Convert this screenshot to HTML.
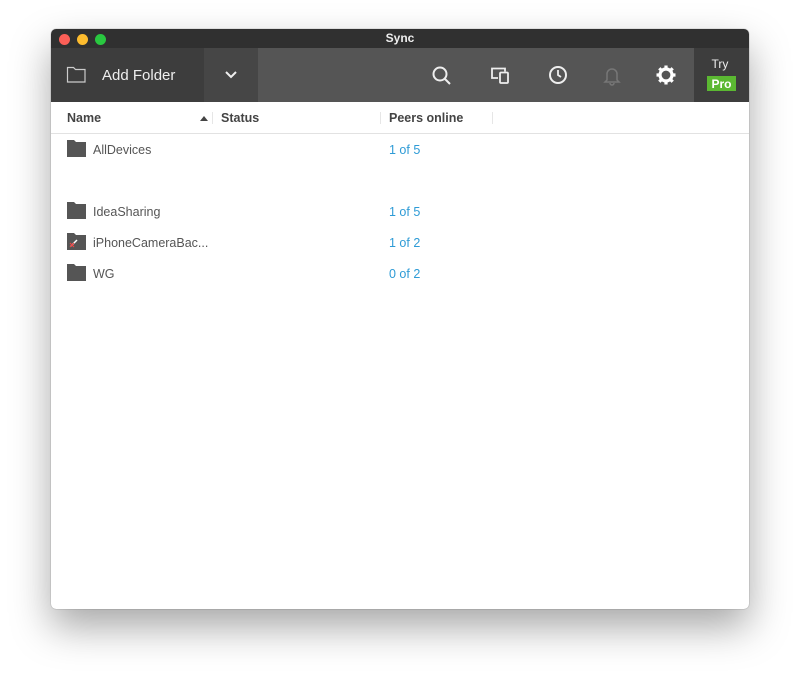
<!DOCTYPE html>
<html><head><style>
body{margin:0;width:800px;height:682px;background:#fff;position:relative;overflow:hidden;font-family:"Liberation Sans",sans-serif}
.win{position:absolute;left:51px;top:29px;width:698px;height:580px;background:#fff;border-radius:5px;overflow:hidden;box-shadow:0 18px 40px rgba(0,0,0,.35),0 0 1px rgba(0,0,0,.5)}
.title{position:absolute;left:0;top:0;width:698px;height:19px;background:#303030;color:#eee;font-size:12px;font-weight:bold;text-align:center;line-height:19px}
.dot{position:absolute;top:5px;width:11px;height:11px;border-radius:50%}
.tb{position:absolute;top:19px;height:54px}
.ic{position:absolute;top:0}
.hdr{position:absolute;top:73px;left:0;width:698px;height:31px;border-bottom:1px solid #e2e2e2;font-size:12.5px;font-weight:bold;color:#444}
.hdr span{position:absolute;top:9px;white-space:nowrap}
.sep{position:absolute;top:10px;width:1px;height:12px;background:#e6e6e6}
.row{position:absolute;left:0;width:698px;height:20px;font-size:12.5px;color:#555;white-space:nowrap}
.row .f{position:absolute;left:16px;top:0}
.row .n{position:absolute;left:42px;top:3px}
.row .p{position:absolute;left:338px;top:3px;color:#2e9bd6}
</style></head><body>
<div class="win">
<div class="title">Sync</div>
<div class="dot" style="left:8px;background:#fc5f57"></div>
<div class="dot" style="left:26px;background:#fdbc2e"></div>
<div class="dot" style="left:44px;background:#29c840"></div>
<div class="tb" style="left:0;width:153px;background:#3d3d3d"></div>
<div class="tb" style="left:153px;width:54px;background:#464646"></div>
<div class="tb" style="left:207px;width:436px;background:#555"></div>
<div class="tb" style="left:643px;width:55px;background:#3d3d3d"></div>
<svg class="ic" style="left:0;top:19px" width="698" height="54">
<path d="M16.5 19.5h6l2 2h9.5v12.5h-17.5z" fill="none" stroke="#ccc" stroke-width="1.2"/>
<text x="51" y="32" fill="#eee" font-size="15" font-family="Liberation Sans">Add Folder</text>
<path d="M175 24l5 5 5-5" fill="none" stroke="#eee" stroke-width="2"/>
<circle cx="389" cy="26" r="6.5" fill="none" stroke="#eee" stroke-width="2"/>
<path d="M394 31l5 5" stroke="#eee" stroke-width="2"/>
<path d="M447 30h-6v-9.5h13v3" fill="none" stroke="#eee" stroke-width="1.8"/>
<rect x="449" y="24.5" width="8" height="10.5" rx="1" fill="none" stroke="#eee" stroke-width="1.8"/>
<circle cx="507" cy="27" r="8" fill="none" stroke="#eee" stroke-width="2"/>
<path d="M507 22v5l3 2" fill="none" stroke="#eee" stroke-width="1.8"/>
<path d="M556 32v-6a5 5 0 0 1 10 0v6l2 2h-14z M559 35a2 2 0 0 0 4 0" fill="none" stroke="#777" stroke-width="1.5"/>
<g transform="translate(615 27)"><circle r="6" fill="none" stroke="#fff" stroke-width="3.2"/><path d="M0-9.5v5M0 4.5v5M-9.5 0h5M4.5 0h5M-6.7-6.7l3.5 3.5M3.2 3.2l3.5 3.5M6.7-6.7l-3.5 3.5M-3.2 3.2l-3.5 3.5" stroke="#fff" stroke-width="3.2"/></g>
<text x="669" y="20" fill="#eee" font-size="12" text-anchor="middle" font-family="Liberation Sans">Try</text>
<rect x="656" y="28" width="29" height="15" fill="#5bb832"/>
<text x="670.5" y="40" fill="#fff" font-size="12" font-weight="bold" text-anchor="middle" font-family="Liberation Sans">Pro</text>
</svg>
<div class="hdr">
<span style="left:16px">Name</span>
<svg style="position:absolute;left:149px;top:14px" width="8" height="5"><path d="M0 5L4 0 8 5z" fill="#444"/></svg>
<div class="sep" style="left:161px"></div>
<span style="left:170px">Status</span>
<div class="sep" style="left:329px"></div>
<span style="left:338px">Peers online</span>
<div class="sep" style="left:441px"></div>
</div>
<div class="row" style="top:111px"><svg class="f" width="19" height="17"><path d="M0 0h7l2 2h10v15h-19z" fill="#555"/></svg><span class="n">AllDevices</span><span class="p">1 of 5</span></div>
<div class="row" style="top:173px"><svg class="f" width="19" height="17"><path d="M0 0h7l2 2h10v15h-19z" fill="#555"/></svg><span class="n">IdeaSharing</span><span class="p">1 of 5</span></div>
<div class="row" style="top:204px"><svg class="f" width="19" height="17"><path d="M0 0h7l2 2h10v15h-19z" fill="#555"/><path d="M4 13l6-6" stroke="#fff" stroke-width="1.5"/><path d="M3 10l4 4M7 10l-4 4" stroke="#e44" stroke-width="1.2"/></svg><span class="n">iPhoneCameraBac...</span><span class="p">1 of 2</span></div>
<div class="row" style="top:235px"><svg class="f" width="19" height="17"><path d="M0 0h7l2 2h10v15h-19z" fill="#555"/></svg><span class="n">WG</span><span class="p">0 of 2</span></div>
</div>
</body></html>
